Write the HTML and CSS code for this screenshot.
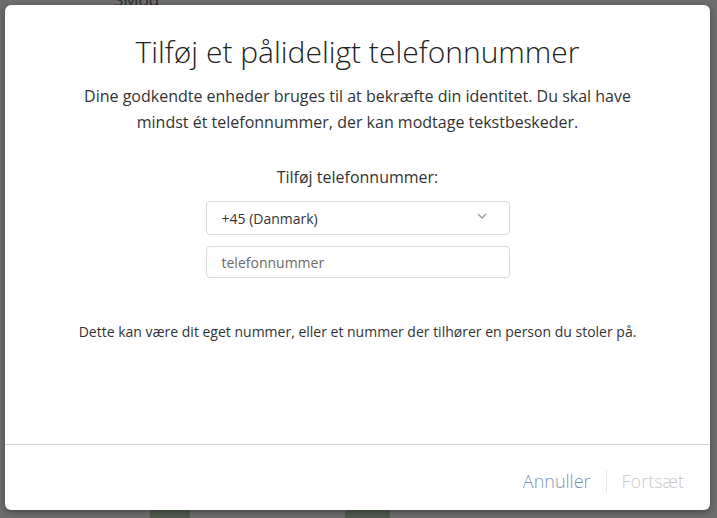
FILE: index.html
```html
<!DOCTYPE html>
<html lang="da">
<head>
<meta charset="utf-8">
<link rel="stylesheet" href="styles.css">
</head>
<body>
<div class="backdrop">
  <div class="bg-text">SMod</div>
  <div class="bg-thumb bg-thumb-a"></div>
  <div class="bg-thumb bg-thumb-b"></div>
</div>
<div class="modal">
  <div class="modal-body">
    <h1 class="title">Tilføj et pålideligt telefonnummer</h1>
    <p class="intro">Dine godkendte enheder bruges til at bekræfte din identitet. Du skal have mindst ét telefonnummer, der kan modtage tekstbeskeder.</p>
    <div class="form">
      <div class="label">Tilføj telefonnummer:</div>
      <div class="select">
        <span>+45 (Danmark)</span>
        <svg class="chev" width="10" height="6" viewBox="0 0 10 6"><path d="M1 1l4 4 4-4" fill="none" stroke="#9a9a9a" stroke-width="1.3"/></svg>
      </div>
      <div class="input">telefonnummer</div>
    </div>
    <p class="note">Dette kan være dit eget nummer, eller et nummer der tilhører en person du stoler på.</p>
  </div>
  <div class="modal-footer">
    <span class="btn btn-cancel">Annuller</span>
    <span class="sep"></span>
    <span class="btn btn-next">Fortsæt</span>
  </div>
</div>
</body>
</html>
```

FILE: styles.css
```css
html, body {
  margin: 0;
  padding: 0;
  width: 717px;
  height: 518px;
  overflow: hidden;
  background: #6d6d6d;
  font-family: "Open Sans", "Noto Sans", sans-serif;
  color: #333;
}
body {
  position: relative;
}
.backdrop {
  position: absolute;
  inset: 0;
}
.bg-text {
  position: absolute;
  left: 114px;
  top: -12px;
  font-size: 17px;
  color: #2b2b2b;
}
.bg-thumb {
  position: absolute;
  top: 508px;
  height: 14px;
  background: #4f5a4c;
  border-top: 2px solid #2f4a30;
}
.bg-thumb-a { left: 150px; width: 40px; }
.bg-thumb-b { left: 345px; width: 45px; }

.modal {
  position: absolute;
  left: 5px;
  top: 5px;
  width: 705px;
  height: 505px;
  background: #fff;
  border-radius: 6px;
  box-shadow: 0 2px 6px rgba(0,0,0,0.35);
  display: flex;
  flex-direction: column;
}
.modal-body {
  flex: 1;
  display: flex;
  flex-direction: column;
  align-items: center;
  padding-top: 27px;
  border-bottom: 1px solid #d3d3d3;
}
.title {
  margin: 0;
  font-weight: 300;
  font-size: 30px;
  line-height: 40px;
  color: #222;
}
.intro {
  margin: 11px 0 0;
  width: 580px;
  text-align: center;
  font-size: 16px;
  line-height: 26px;
  color: #333;
}
.form {
  margin-top: 31px;
  width: 304px;
  display: flex;
  flex-direction: column;
  align-items: stretch;
}
.label {
  text-align: center;
  font-size: 16px;
  line-height: 22px;
  color: #333;
}
.select {
  margin-top: 13px;
  height: 34px;
  box-sizing: border-box;
  border: 1px solid #d9d9d9;
  border-radius: 4px;
  display: flex;
  align-items: center;
  justify-content: space-between;
  padding: 0 22px 0 15px;
  font-size: 14px;
  color: #333;
}
.chev { margin-top: -4px; }
.input {
  margin-top: 11px;
  height: 32px;
  box-sizing: border-box;
  border: 1px solid #d9d9d9;
  border-radius: 4px;
  display: flex;
  align-items: center;
  padding: 0 15px;
  font-size: 14px;
  color: #6a6a6a;
}
.note {
  margin: 44px 0 0;
  font-size: 14px;
  line-height: 20px;
  color: #333;
}
.modal-footer {
  height: 65px;
  display: flex;
  align-items: center;
  justify-content: flex-end;
  padding: 6px 26px 0 0;
  box-sizing: border-box;
}
.btn {
  font-size: 18px;
  font-weight: 300;
}
.btn-cancel { color: #7d95bd; }
.btn-next { color: #c9c9c9; }
.sep {
  width: 1px;
  height: 22px;
  background: #e4e4e4;
  margin: 0 15px;
}
```
